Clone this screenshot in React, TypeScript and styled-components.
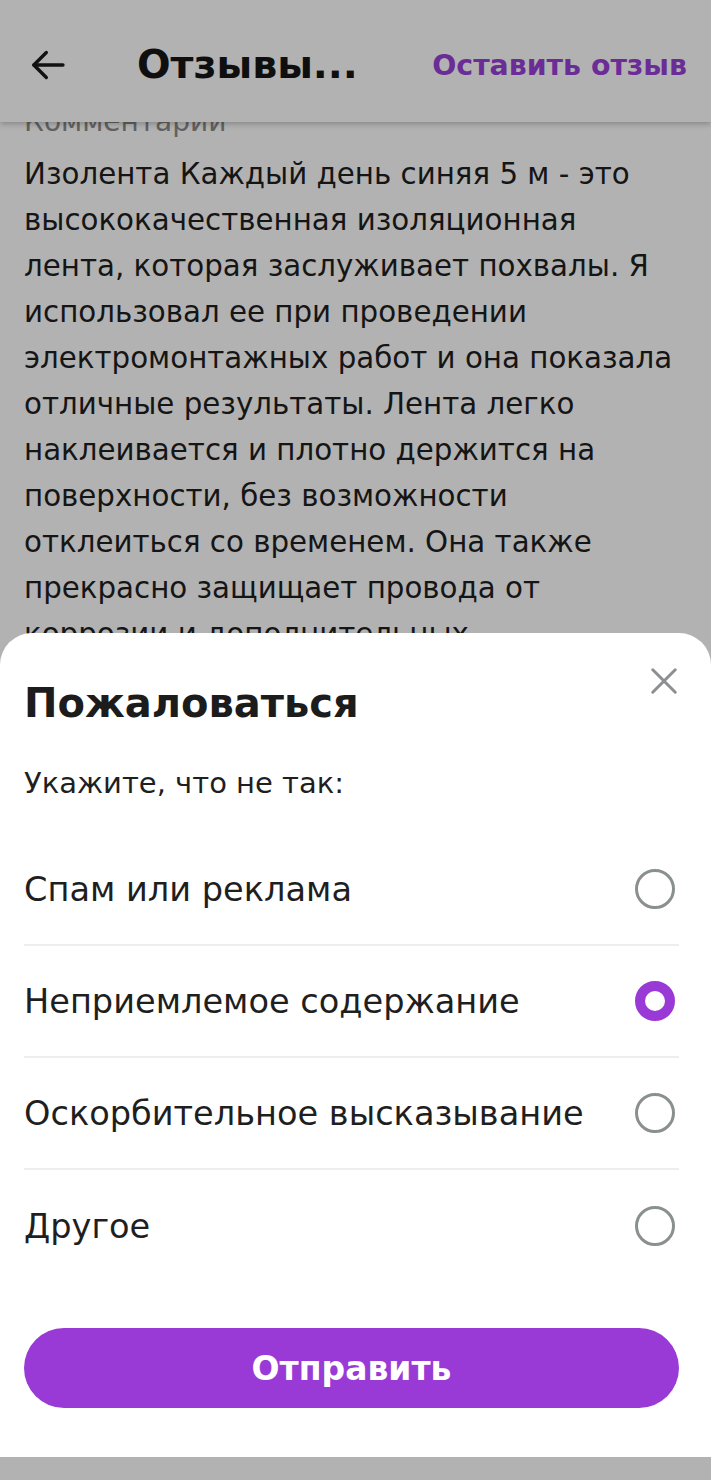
import React, { useState } from 'react'
import { styled, createGlobalStyle } from 'styled-components'

const GlobalStyle = createGlobalStyle`
  html, body {
    margin: 0;
    padding: 0;
    background: #ffffff;
  }
  body {
    font-family: 'DejaVu Sans', Verdana, sans-serif;
  }
`

const Screen = styled.div`
  position: relative;
  width: 711px;
  height: 1480px;
  overflow: hidden;
  background: #ffffff;
`

const Header = styled.header`
  position: relative;
  z-index: 2;
  height: 122px;
  display: flex;
  align-items: center;
  padding: 6px 24px 0 26px;
  background: #ffffff;
  box-shadow: 0 2px 6px rgba(0, 0, 0, 0.25);
  box-sizing: border-box;
`

const BackButton = styled.button`
  display: flex;
  align-items: center;
  justify-content: center;
  width: 44px;
  height: 44px;
  padding: 0;
  margin-top: 2px;
  border: none;
  background: none;
  color: #1a1a1a;
`

const Title = styled.h1`
  margin: 0 0 0 67px;
  font-family: 'DejaVu Sans', sans-serif;
  font-weight: 700;
  font-size: 39.5px;
  color: #161616;
  flex: 1;
  white-space: nowrap;
`

const HeaderLink = styled.a`
  margin-top: 2px;
  font-family: 'DejaVu Sans', sans-serif;
  font-weight: 700;
  font-size: 28.4px;
  color: #9a3fd8;
  white-space: nowrap;
`

const Content = styled.main`
  margin-top: -23px;
  padding: 0 24px;
`

const Label = styled.div`
  font-size: 28px;
  line-height: 46px;
  color: #8c8c8c;
`

const Body = styled.p`
  margin: 6px 0 0;
  font-size: 29.3px;
  line-height: 46px;
  color: #1f1f1f;
`

const Overlay = styled.div`
  position: absolute;
  inset: 0;
  z-index: 3;
  background: rgba(0, 0, 0, 0.3);
`

const Sheet = styled.section`
  position: absolute;
  z-index: 4;
  left: 0;
  right: 0;
  top: 633px;
  bottom: 23px;
  background: #ffffff;
  border-radius: 32px 32px 0 0;
  padding: 0 32px 0 24px;
  box-sizing: border-box;
  display: flex;
  flex-direction: column;
`

const SheetHead = styled.div`
  display: flex;
  justify-content: space-between;
  align-items: flex-start;
  padding-top: 44px;
`

const SheetTitle = styled.h2`
  margin: 0;
  font-family: 'DejaVu Sans', sans-serif;
  font-weight: 700;
  font-size: 40px;
  line-height: 52px;
  color: #1c1c1c;
`

const CloseButton = styled.button`
  margin: -13px -2px 0 0;
  padding: 0;
  width: 34px;
  height: 34px;
  border: none;
  background: none;
  color: #8a8f8f;
  display: flex;
  align-items: center;
  justify-content: center;
`

const Hint = styled.div`
  margin-top: 34px;
  font-size: 29px;
  line-height: 40px;
  color: #1f1f1f;
`

const Options = styled.div`
  margin-top: 31px;
  display: flex;
  flex-direction: column;
`

const Option = styled.label<{ $last?: boolean }>`
  height: 112px;
  display: flex;
  align-items: center;
  justify-content: space-between;
  border-bottom: ${({ $last }) => ($last ? 'none' : '2px solid #eeeeee')};
  box-sizing: border-box;
  cursor: pointer;
`

const OptionText = styled.span`
  font-size: 33.6px;
  color: #1f1f1f;
`

const Radio = styled.span<{ $checked?: boolean }>`
  width: 40px;
  height: 40px;
  box-sizing: border-box;
  border-radius: 50%;
  margin-right: 4px;
  border: ${({ $checked }) => ($checked ? '10px solid #9a3ad6' : '3px solid #8a8f8f')};
`

const SubmitButton = styled.button`
  margin-top: 46px;
  height: 80px;
  border: none;
  border-radius: 40px;
  background: #9a3ad6;
  color: #ffffff;
  font-family: 'DejaVu Sans', sans-serif;
  font-weight: 700;
  font-size: 33px;
`

const reasons = [
  'Спам или реклама',
  'Неприемлемое содержание',
  'Оскорбительное высказывание',
  'Другое',
]

const App = () => {
  const [selected, setSelected] = useState(1)

  return (
    <>
      <GlobalStyle />
      <Screen>
        <Header>
          <BackButton aria-label="Назад">
            <svg width="40" height="40" viewBox="0 0 24 24" fill="none" stroke="currentColor" strokeWidth="2" strokeLinecap="round" strokeLinejoin="round">
              <path d="M21 12H3.5" />
              <path d="M11 4.5 3.5 12l7.5 7.5" />
            </svg>
          </BackButton>
          <Title>Отзывы...</Title>
          <HeaderLink>Оставить отзыв</HeaderLink>
        </Header>
        <Content>
          <Label>Комментарии</Label>
          <Body>
            Изолента Каждый день синяя 5 м - это
            <br />
            высококачественная изоляционная
            <br />
            лента, которая заслуживает похвалы. Я
            <br />
            использовал ее при проведении
            <br />
            электромонтажных работ и она показала
            <br />
            отличные результаты. Лента легко
            <br />
            наклеивается и плотно держится на
            <br />
            поверхности, без возможности
            <br />
            отклеиться со временем. Она также
            <br />
            прекрасно защищает провода от
            <br />
            коррозии и дополнительных
          </Body>
        </Content>
        <Overlay />
        <Sheet>
          <SheetHead>
            <SheetTitle>Пожаловаться</SheetTitle>
            <CloseButton aria-label="Закрыть">
              <svg width="30" height="30" viewBox="0 0 24 24" fill="none" stroke="currentColor" strokeWidth="2.4" strokeLinecap="round">
                <path d="M3 3l18 18M21 3 3 21" />
              </svg>
            </CloseButton>
          </SheetHead>
          <Hint>Укажите, что не так:</Hint>
          <Options>
            {reasons.map((r, i) => (
              <Option key={r} $last={i === reasons.length - 1} onClick={() => setSelected(i)}>
                <OptionText>{r}</OptionText>
                <Radio $checked={selected === i} />
              </Option>
            ))}
          </Options>
          <SubmitButton>Отправить</SubmitButton>
        </Sheet>
      </Screen>
    </>
  )
}

export default App
